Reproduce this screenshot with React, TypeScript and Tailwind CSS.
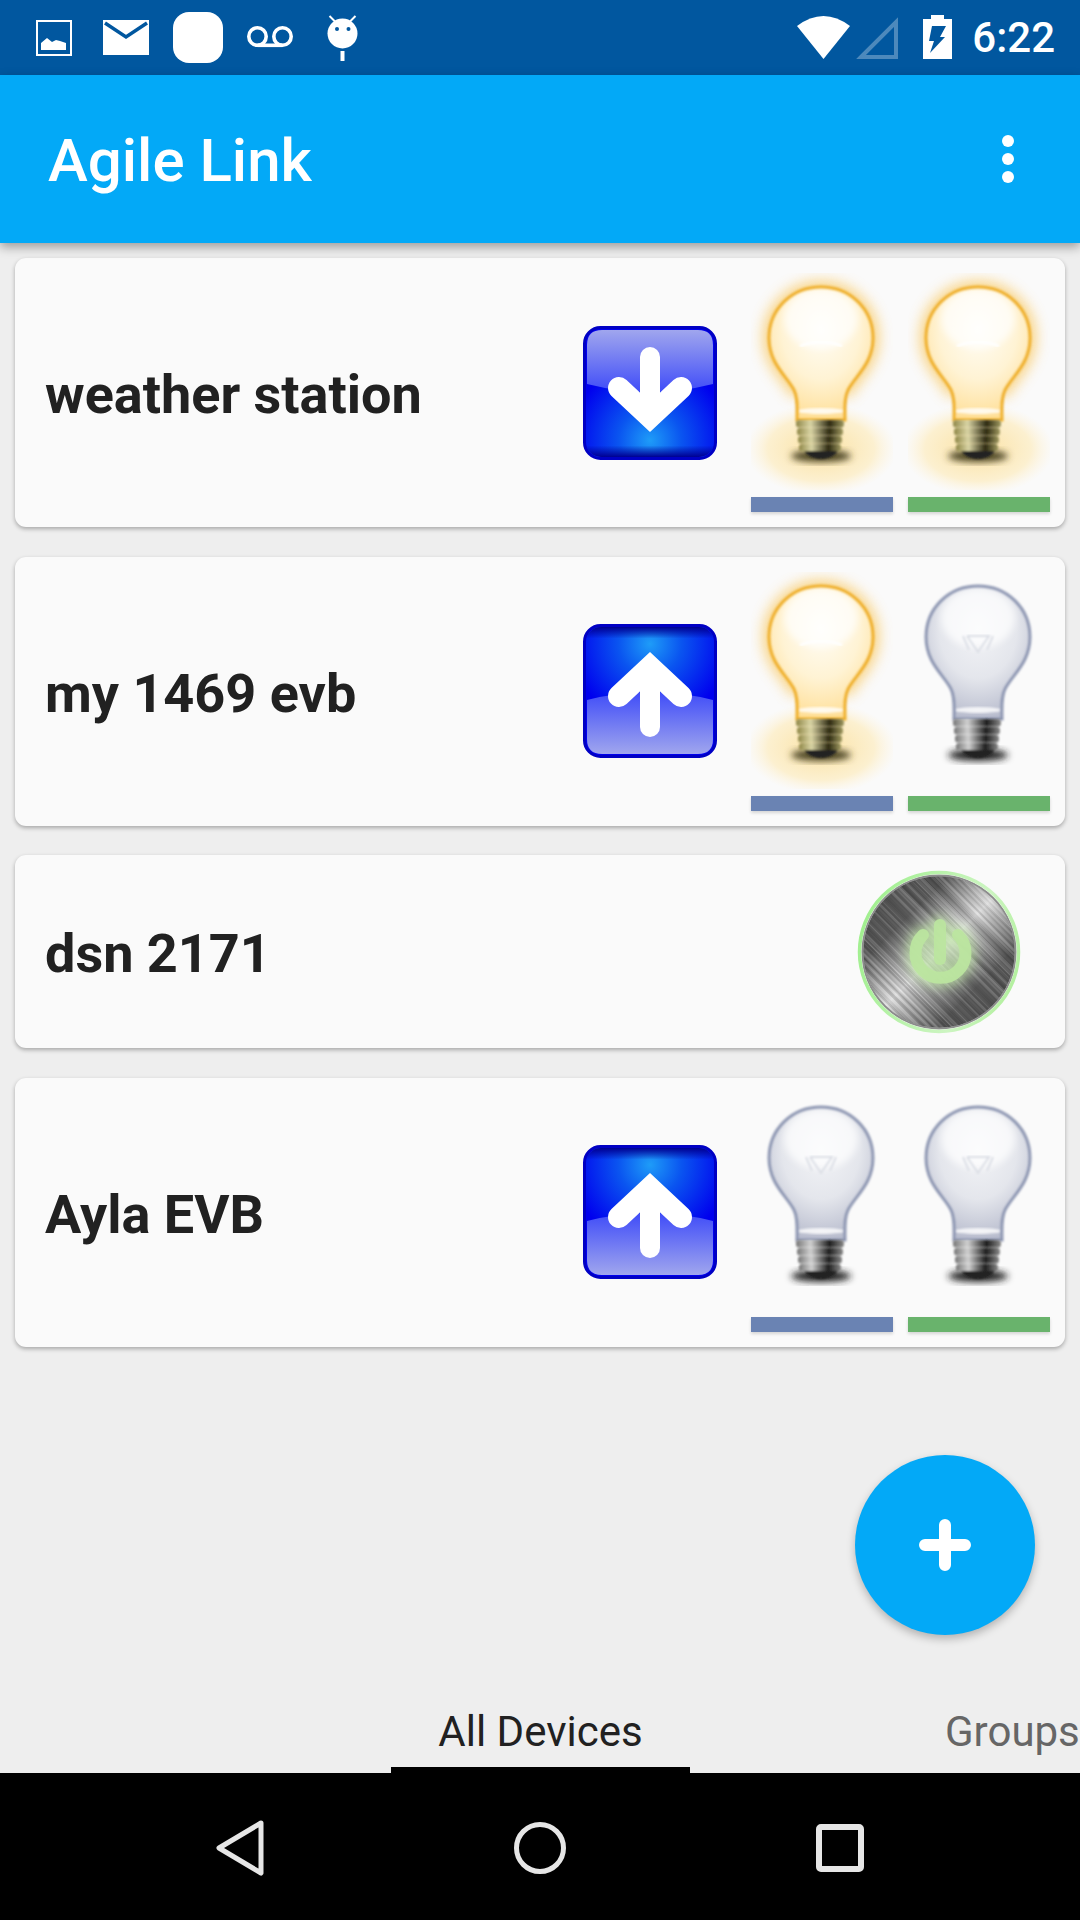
const STATUS_BLUE = "#01579f";

const devices = [
  { id: "a", name: "weather station", arrow: "down", left: true, right: true },
  { id: "b", name: "my 1469 evb", arrow: "up", left: true, right: false },
  { id: "c", name: "dsn 2171" },
  { id: "d", name: "Ayla EVB", arrow: "up", left: false, right: false },
];

// brushed metal streaks for the power button, same every render
const streaks = Array.from({ length: 166 }, (_, i) => {
  const h = Math.sin(i * 12.9898) * 43758.5453;
  const r = h - Math.floor(h);
  return { d: -166 + i * 2, light: r > 0.5, width: 1 + (r * 37) % 3, opacity: ((r * 17) % 1) * 0.16 };
});

function ImageIcon() {
  return (
    <svg width="36" height="75" viewBox="0 0 36 75">
      <rect x="1" y="21" width="34" height="34" fill="none" stroke="white" strokeWidth="2" />
      <path d="M5 50V43L11 38L16 42L20 40L24 41L30 43V50Z" fill="white" />
    </svg>
  );
}

function MailIcon() {
  return (
    <svg width="46" height="75" viewBox="0 0 46 75">
      <rect x="0" y="20" width="46" height="35" fill="white" />
      <path d="M2 23L23 37L44 23" fill="none" stroke={STATUS_BLUE} strokeWidth="3.5" />
    </svg>
  );
}

function VoicemailIcon() {
  return (
    <svg width="46" height="75" viewBox="0 0 46 75">
      <circle cx="10.5" cy="36.5" r="8.7" fill="none" stroke="white" strokeWidth="3.6" />
      <circle cx="35.5" cy="36.5" r="8.7" fill="none" stroke="white" strokeWidth="3.6" />
      <path d="M10.5 45.3H35.5" stroke="white" strokeWidth="3.6" />
    </svg>
  );
}

function AndroidIcon() {
  return (
    <svg width="31" height="75" viewBox="0 0 31 75">
      <circle cx="15.5" cy="33.5" r="15" fill="white" />
      <circle cx="10" cy="29" r="2" fill={STATUS_BLUE} />
      <circle cx="21.5" cy="29" r="2" fill={STATUS_BLUE} />
      <path d="M2.5 16L8 21.5M28.5 16L23 21.5" stroke="white" strokeWidth="2" />
      <rect x="13.5" y="51" width="4" height="10" fill="white" />
    </svg>
  );
}

function WifiIcon() {
  return (
    <svg width="53" height="75" viewBox="0 0 53 75">
      <path d="M26.5 59L0 26Q26.5 6 53 26Z" fill="white" />
    </svg>
  );
}

function SignalIcon() {
  return (
    <svg width="42" height="75" viewBox="0 0 42 75">
      <path d="M5 57L40 22V57Z" fill="none" stroke="white" strokeOpacity="0.3" strokeWidth="4" />
    </svg>
  );
}

function BatteryIcon() {
  return (
    <svg width="29" height="75" viewBox="0 0 29 75">
      <path d="M8 15H21V19H29V59H0V19H8Z" fill="white" />
      <path d="M9 26H23L17 37H22L7 53L11 41H6Z" fill={STATUS_BLUE} />
    </svg>
  );
}

function ArrowTile({ up }: { up: boolean }) {
  const id = up ? "tile-up" : "tile-down";
  return (
    <svg width="134" height="134" viewBox="0 0 134 134" className={up ? "shrink-0 rotate-180" : "shrink-0"}>
      <defs>
        <radialGradient id={`${id}-base`} cx="0.5" cy="0.86" r="0.6">
          <stop offset="0" stopColor="#1e9cf8" />
          <stop offset="0.4" stopColor="#0a55f0" />
          <stop offset="1" stopColor="#0000ee" />
        </radialGradient>
        <linearGradient id={`${id}-gloss`} x1="0" y1="0" x2="0" y2="1">
          <stop offset="0" stopColor="#a0a6ee" />
          <stop offset="1" stopColor="#3f4cf8" />
        </linearGradient>
        <linearGradient id={`${id}-rim`} x1="0" y1="0" x2="0" y2="1">
          <stop offset="0.91" stopColor="#000090" stopOpacity="0" />
          <stop offset="1" stopColor="#000090" />
        </linearGradient>
      </defs>
      <rect x="1.5" y="1.5" width="131" height="131" rx="16" fill={`url(#${id}-base)`} stroke="#0000c4" strokeWidth="3" />
      <rect x="3" y="3" width="128" height="128" rx="15" fill={`url(#${id}-rim)`} />
      <path d="M4 58V19Q4 4 19 4H115Q130 4 130 19V58Q67 74 4 58Z" fill={`url(#${id}-gloss)`} />
      <path d="M67 31V86" stroke="white" strokeWidth="20" strokeLinecap="round" />
      <path d="M36 62L67 91L98 62" fill="none" stroke="white" strokeWidth="22" strokeLinecap="round" />
    </svg>
  );
}

function Bulb({ id, lit }: { id: string; lit: boolean }) {
  const glass = "M46 147C46 135 47 125 43 117C36 103 18 91 18 65C18 36 41 14 70 14C99 14 122 36 122 65C122 91 104 103 97 117C93 125 94 135 94 147Z";
  return (
    <svg width="142" height="217" viewBox="0 0 142 217" className="block">
      <defs>
        <radialGradient id={`${id}-glass`} cx="0.5" cy="0.32" r="0.68">
          <stop offset="0" stopColor={lit ? "#fffdf6" : "#f3f4f7"} />
          <stop offset="0.55" stopColor={lit ? "#fff3d4" : "#e4e6ec"} />
          <stop offset="1" stopColor={lit ? "#ffdf98" : "#b9bdce"} />
        </radialGradient>
        <radialGradient id={`${id}-floor`}>
          <stop offset="0" stopColor="#fbe2a4" />
          <stop offset="0.7" stopColor="#fcf0d0" />
          <stop offset="1" stopColor="#fdf5e2" stopOpacity="0" />
        </radialGradient>
        <linearGradient id={`${id}-thread`} x1="0" y1="0" x2="1" y2="0">
          <stop offset="0" stopColor={lit ? "#8f8748" : "#777"} />
          <stop offset="0.3" stopColor={lit ? "#d9d4a4" : "#d0d0d0"} />
          <stop offset="0.7" stopColor={lit ? "#2e2a12" : "#1e1e1e"} />
          <stop offset="1" stopColor={lit ? "#a09a60" : "#8a8a8a"} />
        </linearGradient>
        <filter id={`${id}-big`} x="-30%" y="-30%" width="160%" height="160%">
          <feGaussianBlur stdDeviation="7" />
        </filter>
        <filter id={`${id}-mid`} x="-30%" y="-30%" width="160%" height="160%">
          <feGaussianBlur stdDeviation="3.5" />
        </filter>
        <filter id={`${id}-soft`} x="-10%" y="-10%" width="120%" height="120%">
          <feGaussianBlur stdDeviation="0.8" />
        </filter>
        <clipPath id={`${id}-frame`}>
          <rect width="142" height="217" />
        </clipPath>
        <clipPath id={`${id}-inner`}>
          <path d={glass} />
        </clipPath>
      </defs>
      <g clipPath={`url(#${id}-frame)`}>
        {lit && (
          <>
            <ellipse cx="70" cy="176" rx="76" ry="46" fill={`url(#${id}-floor)`} />
            <path d="M18 65C18 36 41 14 70 14C99 14 122 36 122 65C122 91 104 103 97 117H43C36 103 18 91 18 65Z" fill="#f9c65a" stroke="#f9c65a" strokeWidth="12" opacity="0.75" filter={`url(#${id}-big)`} />
          </>
        )}
        <ellipse cx="70" cy="183" rx="30" ry="6" fill={lit ? "#4a4320" : "#222"} filter={`url(#${id}-mid)`} />
        <path d={glass} fill={`url(#${id}-glass)`} />
        <g clipPath={`url(#${id}-inner)`}>
          <ellipse cx="70" cy="46" rx="37" ry="30" fill="white" opacity="0.7" filter={`url(#${id}-mid)`} />
          {lit ? (
            <path d="M49 73Q70 65 91 73" fill="none" stroke="white" strokeWidth="2.5" filter={`url(#${id}-soft)`} />
          ) : (
            <path d="M59 64L70 80L81 64H59M55 64L61 78M85 64L79 78" fill="none" stroke="#dcdfe6" strokeWidth="2" filter={`url(#${id}-soft)`} />
          )}
          <ellipse cx="70" cy="138" rx="24" ry="3" fill="white" opacity="0.8" filter={`url(#${id}-soft)`} />
        </g>
        <path d={glass} fill="none" stroke={lit ? "#efb02f" : "#8f98b3"} strokeWidth="3" filter={`url(#${id}-soft)`} />
        <g filter={`url(#${id}-soft)`}>
          {[147, 155, 163, 171].map((y, i) => (
            <rect key={y} x={45 + i} y={y} width={48 - i * 2} height="7.5" rx="3" fill={`url(#${id}-thread)`} />
          ))}
          <path d="M53 178H87Q81 186 70 186Q59 186 53 178Z" fill="#222" />
        </g>
      </g>
    </svg>
  );
}

function PowerDisc() {
  return (
    <svg width="166" height="166" viewBox="0 0 166 166" className="shrink-0">
      <defs>
        <linearGradient id="metal" x1="0" y1="0" x2="1" y2="1">
          <stop offset="0" stopColor="#4c4c4c" />
          <stop offset="0.28" stopColor="#606060" />
          <stop offset="0.42" stopColor="#b5b5b5" />
          <stop offset="0.5" stopColor="#dedede" />
          <stop offset="0.58" stopColor="#b0b0b0" />
          <stop offset="0.74" stopColor="#5e5e5e" />
          <stop offset="1" stopColor="#505050" />
        </linearGradient>
        <linearGradient id="disc-ring" x1="0" y1="0.3" x2="1" y2="0.6">
          <stop offset="0" stopColor="#a0ef8e" />
          <stop offset="0.7" stopColor="#cdf5c2" />
          <stop offset="1" stopColor="#b4f0a0" />
        </linearGradient>
        <clipPath id="disc">
          <circle cx="83" cy="83" r="76" />
        </clipPath>
        <filter id="power-glow" x="-40%" y="-40%" width="180%" height="180%">
          <feGaussianBlur stdDeviation="6" />
        </filter>
        <filter id="streak-blur" x="-5%" y="-5%" width="110%" height="110%">
          <feGaussianBlur stdDeviation="0.7" />
        </filter>
      </defs>
      <circle cx="83" cy="83" r="76" fill="url(#metal)" />
      <g clipPath="url(#disc)">
        <g filter="url(#streak-blur)">
          {streaks.map((s) => (
            <line
              key={s.d}
              x1={s.d}
              y1="0"
              x2={s.d + 166}
              y2="166"
              stroke={s.light ? "white" : "black"}
              strokeOpacity={s.opacity}
              strokeWidth={s.width}
            />
          ))}
        </g>
      </g>
      <circle cx="83" cy="83" r="76.5" fill="none" stroke="#8c8c8c" strokeWidth="2" />
      <circle cx="83" cy="83" r="79.5" fill="none" stroke="url(#disc-ring)" strokeWidth="3.5" />
      <g fill="none" stroke="#bce6a0" strokeLinecap="round">
        <g filter="url(#power-glow)" strokeWidth="18" opacity="0.75">
          <path d="M67 66A25 25 0 1 0 102 66" />
          <path d="M84 56V90" />
        </g>
        <g opacity="0.92">
          <path d="M67 66A25 25 0 1 0 102 66" strokeWidth="12" />
          <path d="M84 56V90" strokeWidth="12" />
        </g>
      </g>
    </svg>
  );
}

function DeviceCard({ device }: { device: (typeof devices)[number] }) {
  const hasOutputs = device.arrow !== undefined;
  return (
    <div
      className={`mx-[15px] flex items-center rounded-[11px] bg-[#fafafa] pl-[30px] shadow-[0_2px_4px_rgba(0,0,0,0.3)] ${
        hasOutputs ? "h-[269px] pr-[15px]" : "h-[193px] pr-[43px]"
      }`}
    >
      <div className="flex-1 pt-[5px] text-[54px] leading-none font-bold text-[#212121]">{device.name}</div>
      {hasOutputs ? (
        <div className="flex items-center">
          <ArrowTile up={device.arrow === "up"} />
          <div className="ml-[34px] flex gap-[15px]">
            <div>
              <Bulb id={`${device.id}-l`} lit={!!device.left} />
              <div className="mt-[7px] h-[15px] bg-[#6a83b3] shadow-[0_2px_3px_rgba(0,0,0,0.15)]" />
            </div>
            <div>
              <Bulb id={`${device.id}-r`} lit={!!device.right} />
              <div className="mt-[7px] h-[15px] bg-[#69b36c] shadow-[0_2px_3px_rgba(0,0,0,0.15)]" />
            </div>
          </div>
        </div>
      ) : (
        <PowerDisc />
      )}
    </div>
  );
}

export default function App() {
  return (
    <div className="relative flex h-[1920px] w-[1080px] flex-col overflow-hidden bg-[#eeeeee] font-['Roboto',sans-serif]">
      <div className="flex h-[75px] shrink-0 items-center justify-between bg-[#01579f] pr-[25px] pl-[36px] text-white">
        <div className="flex items-center">
          <ImageIcon />
          <div className="ml-[31px]">
            <MailIcon />
          </div>
          <div className="ml-[24px] h-[51px] w-[50px] rounded-[16px] bg-white" />
          <div className="ml-[24px]">
            <VoicemailIcon />
          </div>
          <div className="ml-[34px]">
            <AndroidIcon />
          </div>
        </div>
        <div className="flex items-center">
          <WifiIcon />
          <div className="ml-[6px]">
            <SignalIcon />
          </div>
          <div className="ml-[25px]">
            <BatteryIcon />
          </div>
          <span className="ml-[20px] text-[42px] leading-none font-medium">6:22</span>
        </div>
      </div>

      <header className="relative z-10 flex h-[168px] shrink-0 items-center justify-between bg-[#03a9f7] pr-[66px] pl-[48px] text-white shadow-[0_4px_10px_rgba(0,0,0,0.35)]">
        <h1 className="pt-[4px] text-[60px] leading-none font-medium">Agile Link</h1>
        <div className="flex flex-col gap-[6px]">
          <span className="h-[12px] w-[12px] rounded-full bg-white" />
          <span className="h-[12px] w-[12px] rounded-full bg-white" />
          <span className="h-[12px] w-[12px] rounded-full bg-white" />
        </div>
      </header>

      <main className="relative flex flex-1 flex-col justify-between pt-[15px]">
        <div className="flex flex-col gap-[29.5px]">
          {devices.map((device) => (
            <DeviceCard key={device.id} device={device} />
          ))}
        </div>

        <button className="absolute top-[1212px] left-[855px] flex h-[180px] w-[180px] items-center justify-center rounded-full bg-[#03a9f7] shadow-[0_4px_8px_rgba(0,0,0,0.25)]">
          <svg width="52" height="52" viewBox="0 0 52 52">
            <path d="M26 6V46M6 26H46" stroke="white" strokeWidth="12" strokeLinecap="round" fill="none" />
          </svg>
        </button>

        <div className="flex h-[84px] items-stretch pl-[391px]">
          <div className="flex w-[299px] items-center justify-center border-b-[6px] border-black pt-[6px] text-[42px] text-[#212121]">
            All Devices
          </div>
          <div className="flex items-center pl-[255px] text-[42px] whitespace-nowrap text-[#666666]">Groups</div>
        </div>
      </main>

      <nav className="flex h-[147px] shrink-0 items-center justify-center gap-[250px] bg-black pt-[3px]">
        <svg width="48" height="56" viewBox="0 0 48 56">
          <path d="M45 3L3 28L45 53Z" fill="none" stroke="#e6e6e6" strokeWidth="5" strokeLinejoin="round" />
        </svg>
        <svg width="52" height="52" viewBox="0 0 52 52">
          <circle cx="26" cy="26" r="23.5" fill="none" stroke="#e6e6e6" strokeWidth="5" />
        </svg>
        <svg width="48" height="48" viewBox="0 0 48 48">
          <rect x="3" y="3" width="42" height="42" rx="2" fill="none" stroke="#e6e6e6" strokeWidth="6" />
        </svg>
      </nav>
    </div>
  );
}
